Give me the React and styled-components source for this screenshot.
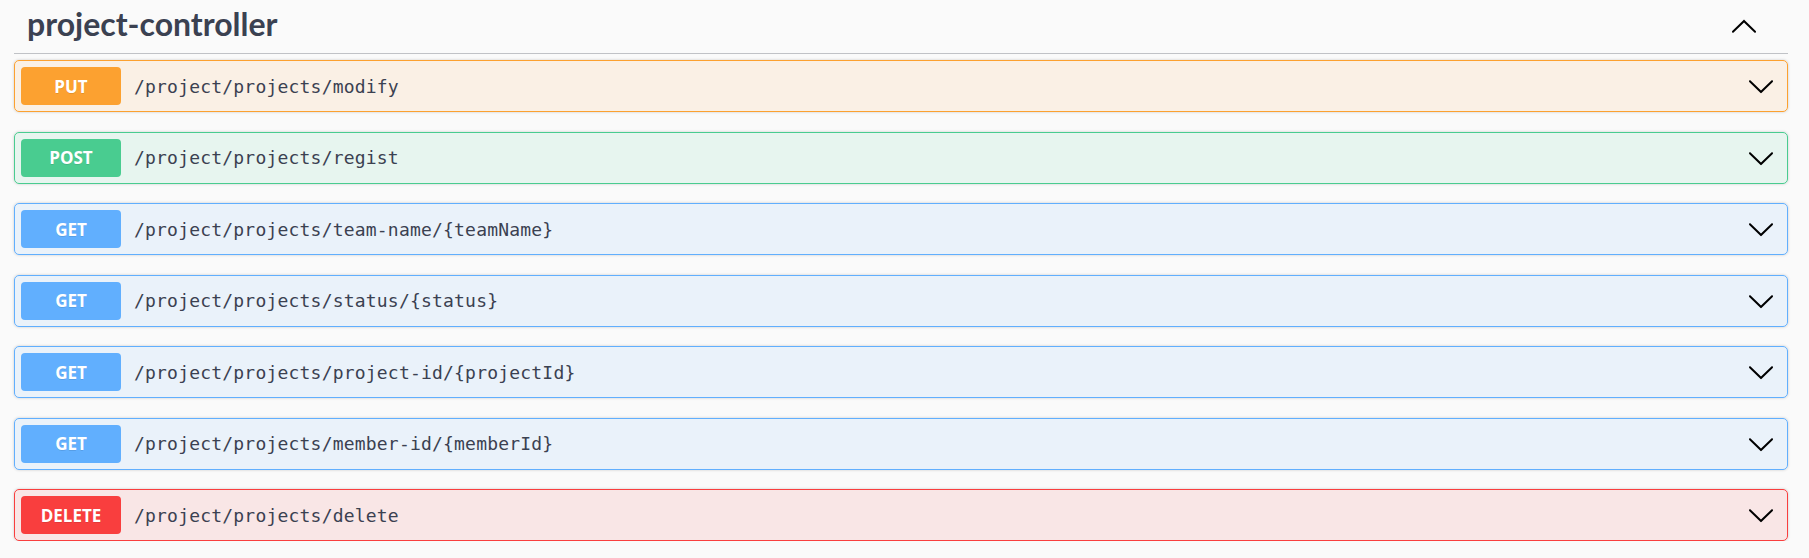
import styled, { createGlobalStyle } from "styled-components";

const GlobalStyle = createGlobalStyle`
  body {
    margin: 0;
    background: #fafafa;
    font-family: Lato, "Open Sans", sans-serif;
  }
`;

const methods = {
  PUT: "252, 161, 48",
  POST: "73, 204, 144",
  GET: "97, 175, 254",
  DELETE: "249, 62, 62",
};

const endpoints = [
  { method: "PUT", path: "/project/projects/modify" },
  { method: "POST", path: "/project/projects/regist" },
  { method: "GET", path: "/project/projects/team-name/{teamName}" },
  { method: "GET", path: "/project/projects/status/{status}" },
  { method: "GET", path: "/project/projects/project-id/{projectId}" },
  { method: "GET", path: "/project/projects/member-id/{memberId}" },
  { method: "DELETE", path: "/project/projects/delete" },
];

const Wrapper = styled.div`
  padding: 0 21px 0 14px;
`;

const TagHeader = styled.div`
  display: flex;
  align-items: center;
  justify-content: space-between;
  height: 54px;
  box-sizing: border-box;
  padding: 0 30px 0 13px;
  border-bottom: 1px solid rgba(59, 65, 81, 0.3);
`;

const TagTitle = styled.h3`
  margin: 0;
  font-family: Lato, "Open Sans", sans-serif;
  font-size: 32px;
  font-weight: 700;
  color: #3b4151;
  line-height: 1;
  padding-bottom: 6px;
`;

const List = styled.div`
  display: flex;
  flex-direction: column;
  gap: 19.5px;
  margin-top: 6px;
`;

const Opblock = styled.div`
  display: flex;
  align-items: center;
  height: 52px;
  box-sizing: border-box;
  padding: 0 12px 0 6px;
  border: 1px solid rgb(${(p) => p.$rgb});
  border-radius: 5px;
  background: rgba(${(p) => p.$rgb}, 0.1);
  box-shadow: 0 0 3px rgba(0, 0, 0, 0.19);
`;

const Method = styled.span`
  display: flex;
  align-items: center;
  justify-content: center;
  width: 100px;
  height: 38px;
  flex-shrink: 0;
  border-radius: 4px;
  background: rgb(${(p) => p.$rgb});
  color: #fff;
  font-family: "Open Sans", Lato, sans-serif;
  font-size: 17px;
  font-weight: 700;
  text-shadow: 0 1px 0 rgba(0, 0, 0, 0.1);
`;

const Path = styled.span`
  flex: 1;
  padding-left: 13px;
  font-family: "DejaVu Sans Mono", "Liberation Mono", monospace;
  font-size: 18px;
  letter-spacing: 0.2px;
  color: #3b4151;
`;

const Arrow = styled.svg`
  width: 28px;
  height: 28px;
  flex-shrink: 0;
  fill: #000;
  transform: ${(p) => (p.$up ? "rotate(180deg)" : "none")};
`;

function Chevron({ up }) {
  return (
    <Arrow $up={up} viewBox="0 0 20 20">
      <path d="M17.418 6.109c.272-.268.709-.268.979 0s.271.701 0 .969l-7.908 7.83c-.27.268-.707.268-.979 0l-7.908-7.83c-.27-.268-.27-.701 0-.969.271-.268.709-.268.979 0L10 13.25l7.418-7.141z" />
    </Arrow>
  );
}

export default function App() {
  return (
    <>
      <GlobalStyle />
      <Wrapper>
        <TagHeader>
          <TagTitle>project-controller</TagTitle>
          <Chevron up />
        </TagHeader>
        <List>
          {endpoints.map((e) => (
            <Opblock key={e.path} $rgb={methods[e.method]}>
              <Method $rgb={methods[e.method]}>{e.method}</Method>
              <Path>{e.path}</Path>
              <Chevron />
            </Opblock>
          ))}
        </List>
      </Wrapper>
    </>
  );
}
